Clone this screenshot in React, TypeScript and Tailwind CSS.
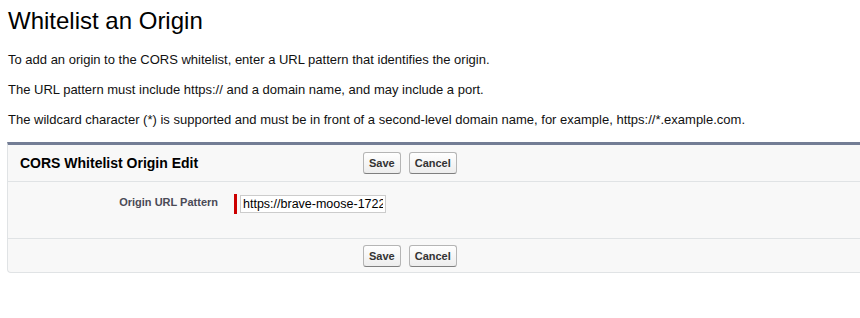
import React from "react";

const font = { fontFamily: '"Liberation Sans", Arial, sans-serif' };

function Btn({ label }: { label: string }) {
  return (
    <button
      type="button"
      className="h-[22px] px-[5px] rounded-[3px] border border-[#b5b5b5] border-b-[#7f7f7f] bg-gradient-to-b from-white to-[#ededed] text-[11px] font-bold text-[#333] leading-none"
    >
      {label}
    </button>
  );
}

export default function App() {
  return (
    <div className="w-[860px] h-[318px] overflow-hidden bg-white text-black" style={font}>
      <div className="pl-[8px]">
        {/* Page intro */}
        <h1 className="mt-[7px] text-[24px] leading-[28px] font-normal">Whitelist an Origin</h1>
        <div className="mt-[17px] flex flex-col gap-[14px] text-[13px] leading-[16px] text-[#111]">
          <p>To add an origin to the CORS whitelist, enter a URL pattern that identifies the origin.</p>
          <p>The URL pattern must include https:// and a domain name, and may include a port.</p>
          <p>
            The wildcard character (*) is supported and must be in front of a second-level domain name, for example,
            https://*.example.com.
          </p>
        </div>
      </div>

      {/* Edit block */}
      <div className="mt-[14px] ml-[7px] w-[880px] bg-[#f8f8f8] border-t-[3px] border-t-[#737d95] border-l border-b border-[#e0e3e5] rounded-bl-[4px]">
        <div className="flex items-start pt-[7px] h-[37px] border-b border-[#e0e3e5]">
          <h2 className="w-[355px] pl-[12px] pt-[2px] text-[14px] leading-[18px] font-bold">CORS Whitelist Origin Edit</h2>
          <div className="flex gap-[8px]">
            <Btn label="Save" />
            <Btn label="Cancel" />
          </div>
        </div>

        <div className="h-[57px] border-b border-[#e0e3e5] flex items-start pt-[13px]">
          <div className="w-[210px] text-right text-[11px] leading-[14px] font-bold text-[#4a4a56]">Origin URL Pattern</div>
          <div className="ml-[16px] flex">
            <div className="w-[3px] h-[20px] -mt-[1px] bg-[#c00]" />
            <input
              readOnly
              value="https://brave-moose-17221.example.com"
              className="ml-[3px] w-[146px] h-[18px] border border-[#ccc] bg-white px-[2px] text-[12.5px] text-black outline-none"
              style={font}
            />
          </div>
        </div>

        <div className="flex items-start pt-[6px] h-[33px]">
          <div className="w-[355px]" />
          <div className="flex gap-[8px]">
            <Btn label="Save" />
            <Btn label="Cancel" />
          </div>
        </div>
      </div>
    </div>
  );
}
